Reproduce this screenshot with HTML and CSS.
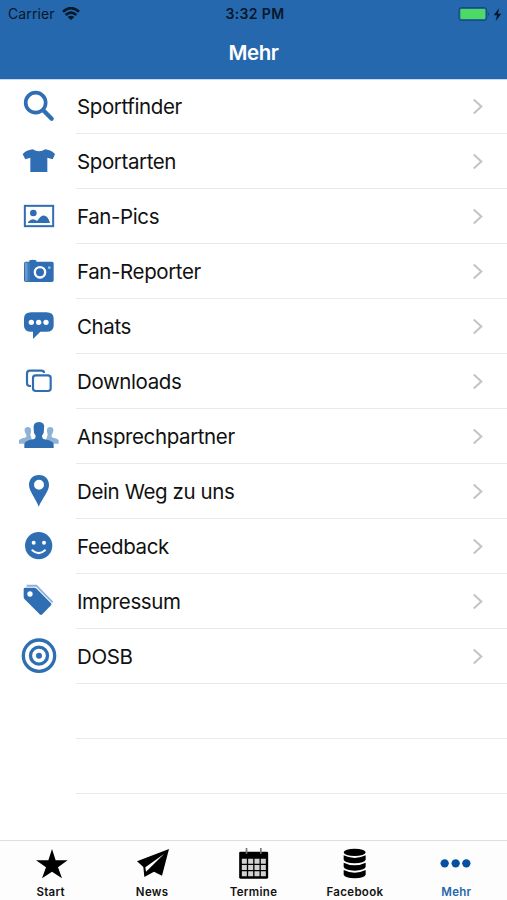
FILE: index.html
```html
<!DOCTYPE html>
<html lang="de">
<head>
<meta charset="utf-8">
<title>Mehr</title>
<link rel="stylesheet" href="styles.css">
</head>
<body>
<header class="header">
  <div class="status">
    <div class="status-left"><span class="carrier">Carrier</span>
      <svg class="wifi" viewBox="0 0 54 39"><g fill="none" stroke="#06182b" stroke-width="8"><path d="M3 14Q27-7 51 14"/><path d="M11 24Q27 10 43 24"/></g><path fill="#06182b" d="M17 30Q27 22 37 30L27 39Z"/></svg>
    </div>
    <span class="time">3:32 PM</span>
    <div class="status-right">
      <svg class="battery" viewBox="614 15 132 48"><rect x="617" y="20" width="83" height="38" rx="7" fill="none" stroke="#174777" stroke-width="3"/><rect x="621" y="24" width="75" height="30" rx="3" fill="#4cd964"/><path d="M704 34q7 5 0 11z" fill="#174777"/><path d="M737 22L721 43h10l-4 17 17-22h-10z" fill="#06182b"/></svg>
    </div>
  </div>
  <h1 class="title">Mehr</h1>
</header>
<main class="list">
  <div class="row">
    <svg class="icon" viewBox="57 18 120 120"><circle cx="107" cy="68" r="30" fill="none" stroke="#2f6eb3" stroke-width="11"/><path d="M132 93L155 116" stroke="#2f6eb3" stroke-width="13" stroke-linecap="round"/></svg>
    <div class="cell"><span class="label">Sportfinder</span><svg class="chevron" viewBox="0 0 12 18"><path d="M1.5 1.5L9.5 9 1.5 16.5"/></svg></div>
  </div>
  <div class="row">
    <svg class="icon" viewBox="57 183 120 120"><path fill="#2f6eb3" d="M68 223Q76 211 98 208Q117 220 136 208Q157 211 165 223L158 238L142 233V276H91V233L76 238Z"/></svg>
    <div class="cell"><span class="label">Sportarten</span><svg class="chevron" viewBox="0 0 12 18"><path d="M1.5 1.5L9.5 9 1.5 16.5"/></svg></div>
  </div>
  <div class="row">
    <svg class="icon" viewBox="57 348 120 120"><rect x="74.5" y="377.5" width="85" height="61" fill="none" stroke="#2f6eb3" stroke-width="6"/><circle cx="100" cy="399" r="10" fill="#2f6eb3"/><path fill="#2f6eb3" d="M84 429V426Q96 413 107 421L112 422Q124 404 134 407Q145 410 150 429Z"/></svg>
    <div class="cell"><span class="label">Fan-Pics</span><svg class="chevron" viewBox="0 0 12 18"><path d="M1.5 1.5L9.5 9 1.5 16.5"/></svg></div>
  </div>
  <div class="row">
    <svg class="icon" viewBox="57 18 120 120"><path fill="#2f6eb3" d="M72 55Q72 50 78 50H88V46Q99 42 109 46V50H156Q161 50 161 55V106Q161 111 156 111H77Q72 111 72 106Z"/><path d="M74 53h9v56h-7z" fill="#6b9bcd"/><path d="M87 53v56" stroke="#6795c6" stroke-width="2"/><circle cx="120" cy="82" r="15.5" fill="none" stroke="#fff" stroke-width="7"/><circle cx="148" cy="68" r="4" fill="#a7c5e3"/></svg>
    <div class="cell"><span class="label">Fan-Reporter</span><svg class="chevron" viewBox="0 0 12 18"><path d="M1.5 1.5L9.5 9 1.5 16.5"/></svg></div>
  </div>
  <div class="row">
    <svg class="icon" viewBox="57 183 120 120"><path fill="#2f6eb3" d="M94 202H139Q161 202 161 221V242Q161 260 139 260H121L99 282V260H94Q72 260 72 242V221Q72 202 94 202Z"/><g fill="#fff"><circle cx="94" cy="232" r="8"/><circle cx="116" cy="232" r="8"/><circle cx="138" cy="232" r="8"/></g></svg>
    <div class="cell"><span class="label">Chats</span><svg class="chevron" viewBox="0 0 12 18"><path d="M1.5 1.5L9.5 9 1.5 16.5"/></svg></div>
  </div>
  <div class="row">
    <svg class="icon" viewBox="57 348 120 120"><g fill="none" stroke="#2f6eb3" stroke-width="6.5"><rect x="99" y="391" width="53" height="47" rx="8"/><path d="M93 423H89Q81 423 81 415V386Q81 377 90 377H124Q132 377 132 384"/></g></svg>
    <div class="cell"><span class="label">Downloads</span><svg class="chevron" viewBox="0 0 12 18"><path d="M1.5 1.5L9.5 9 1.5 16.5"/></svg></div>
  </div>
  <div class="row">
    <svg class="icon" viewBox="57 18 120 120"><g fill="#8fb2d7"><path d="M57 101V91Q58 86 74 83L79 81V75Q71 61 75 55Q83 47 92 55Q95 61 91 74L96 90V101Z"/><path d="M176 101V91Q175 86 159 83L155 81V75Q163 61 159 55Q151 47 142 55Q139 61 143 74L138 90V101Z"/></g><path fill="#2f6eb3" d="M73 114V101Q76 92 99 88Q107 86 107 77Q100 69 101 57Q98 36 117 36Q136 36 132 57Q133 69 126 77Q126 86 134 88Q157 92 161 101V114Z"/></svg>
    <div class="cell"><span class="label">Ansprechpartner</span><svg class="chevron" viewBox="0 0 12 18"><path d="M1.5 1.5L9.5 9 1.5 16.5"/></svg></div>
  </div>
  <div class="row">
    <svg class="icon" viewBox="57 183 120 120"><path fill="#2f6eb3" fill-rule="evenodd" d="M117 195C97 195 87 209 87 225C87 244 108 267 116 290C126 267 147 244 147 225C147 209 137 195 117 195ZM117 209A15 15 0 1 1 117 239A15 15 0 1 1 117 209Z"/></svg>
    <div class="cell"><span class="label">Dein Weg zu uns</span><svg class="chevron" viewBox="0 0 12 18"><path d="M1.5 1.5L9.5 9 1.5 16.5"/></svg></div>
  </div>
  <div class="row">
    <svg class="icon" viewBox="57 348 120 120"><circle cx="116" cy="407" r="41" fill="#2f6eb3"/><g fill="#fff"><circle cx="101" cy="398" r="6"/><circle cx="132" cy="398" r="6"/></g><path d="M97 421Q116 438 135 421" fill="none" stroke="#fff" stroke-width="6" stroke-linecap="round"/></svg>
    <div class="cell"><span class="label">Feedback</span><svg class="chevron" viewBox="0 0 12 18"><path d="M1.5 1.5L9.5 9 1.5 16.5"/></svg></div>
  </div>
  <div class="row">
    <svg class="icon" viewBox="57 33 120 120"><path d="M80 47H109L158 97" fill="none" stroke="#8fb2d7" stroke-width="6"/><path fill="#2f6eb3" fill-rule="evenodd" d="M71 57Q71 53 76 53H103Q107 53 110 56L153 100Q156 103 153 106L127 133Q123 137 119 133L74 88Q71 85 71 81ZM90 64A8 8 0 1 0 90 80A8 8 0 1 0 90 64Z"/></svg>
    <div class="cell"><span class="label">Impressum</span><svg class="chevron" viewBox="0 0 12 18"><path d="M1.5 1.5L9.5 9 1.5 16.5"/></svg></div>
  </div>
  <div class="row">
    <svg class="icon" viewBox="57 198 120 120"><g fill="none" stroke="#2f6eb3" stroke-width="10"><circle cx="117" cy="257" r="47"/><circle cx="117" cy="257" r="25.5"/></g><circle cx="117" cy="257" r="9" fill="#2f6eb3"/></svg>
    <div class="cell"><span class="label">DOSB</span><svg class="chevron" viewBox="0 0 12 18"><path d="M1.5 1.5L9.5 9 1.5 16.5"/></svg></div>
  </div>
  <div class="row"><div class="cell"></div></div>
  <div class="row"><div class="cell"></div></div>
</main>
<nav class="tabs">
  <div class="tab"><svg class="tab-icon" viewBox="98 48 108 108"><path d="M155 57L166 91H202L173 112L185 145L155 125L125 145L137 112L107 91H144Z"/></svg><span>Start</span></div>
  <div class="tab"><svg class="tab-icon" viewBox="402 48 108 108"><path d="M507 57L486 137L462 125L433 141L430 111L411 94Z"/><path d="M492 72L436 112L438 125Z" fill="#fff"/></svg><span>News</span></div>
  <div class="tab"><svg class="tab-icon" viewBox="-52.500 48 108 108"><rect x="-43" y="65" width="87" height="81" rx="4"/><path d="M-21 54v17M22 54v17" stroke="#777" stroke-width="5"/><g fill="#d2d2d2"><path d="M-35 86h15v15h-15zM-16 86h15v15h-15zM3 86h15v15H3zM22 86h15v15H22zM-35 105h15v15h-15zM-16 105h15v15h-15zM3 105h15v15H3zM22 105h15v15H22zM-35 124h15v15h-15zM-16 124h15v15h-15zM3 124h15v15H3zM22 124h15v15H22z"/></g></svg><span>Termine</span></div>
  <div class="tab"><svg class="tab-icon" viewBox="252 48 108 108"><ellipse cx="305" cy="67" rx="33" ry="11"/><path d="M272 76Q305 92 338 76V89Q334 99 305 100Q276 99 272 89ZM272 98Q305 114 338 98V111Q334 121 305 122Q276 121 272 111ZM272 120Q305 136 338 120V134Q334 144 305 145Q276 144 272 134Z"/></svg><span>Facebook</span></div>
  <div class="tab active"><svg class="tab-icon" viewBox="556 48 108 108"><circle cx="576" cy="100" r="12.5"/><circle cx="609" cy="100" r="12.5"/><circle cx="641" cy="100" r="12.5"/></svg><span>Mehr</span></div>
</nav>
</body>
</html>
```
FILE: styles.css
```css
* { box-sizing: border-box; }
body {
  margin: 0;
  height: 900px;
  display: flex;
  flex-direction: column;
  overflow: hidden;
  background: #fff;
  color: #111;
  font-family: Inter, "Liberation Sans", sans-serif;
}
svg { display: block; flex: none; }
.header {
  height: 79px;
  flex: none;
  background: #2568ad;
  box-shadow: 0 0.5px 0 #8fb8de;
}
.status {
  display: grid;
  grid-template-columns: 1fr auto 1fr;
  align-items: center;
  height: 27px;
  padding: 0 5px 0 8px;
  color: #06182b;
  font-size: 14px;
}
.status-left { display: flex; align-items: center; gap: 7px; }
.carrier { letter-spacing: 0.1px; }
.wifi { width: 18px; height: 13px; }
.time { font-weight: 600; letter-spacing: 0.35px; }
.status-right { display: flex; justify-content: flex-end; }
.battery { width: 44px; height: 16px; }
.title {
  margin: 0;
  color: #fff;
  font-size: 20.5px;
  font-weight: 600;
  line-height: 51px;
  letter-spacing: -0.4px;
  text-align: center;
}
.list { flex: 1; }
.row { display: flex; height: 55px; padding-left: 19px; }
.row:not(:has(.icon)) { padding-left: 76px; }
.icon { width: 40px; height: 40px; margin: 7px 17px 0 0; }
.cell {
  flex: 1;
  display: flex;
  align-items: center;
  justify-content: space-between;
  padding: 2px 23px 0 1px;
  border-bottom: 1px solid #e9e9eb;
}
.label {
  font-size: 20.5px;
  line-height: 26px;
  letter-spacing: -0.39px;
  white-space: nowrap;
}
.chevron { width: 12px; height: 17px; margin-bottom: 2px; }
.chevron path { fill: none; stroke: #c4c4c8; stroke-width: 2.2; }
.tabs {
  display: flex;
  flex: none;
  height: 60px;
  border-top: 1px solid #dedede;
  background: #fdfdfd;
}
.tab {
  flex: 1;
  display: flex;
  flex-direction: column;
  align-items: center;
  padding-top: 5px;
  color: #111;
  font-size: 11.5px;
  font-weight: 600;
  line-height: 20px;
  letter-spacing: 0.3px;
}
.tab-icon { width: 36px; height: 36px; fill: #000; }
.active { color: #2568ad; }
.active .tab-icon { fill: #07509f; }
```
